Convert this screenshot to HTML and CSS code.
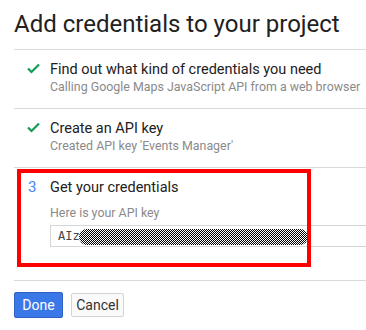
FILE: index.html
```html
<!DOCTYPE html>
<html>
<head>
<meta charset="utf-8">
<link rel="stylesheet" href="styles.css">
</head>
<body>
<div class="page">
  <h1 class="title">Add credentials to your project</h1>
  <div class="step">
    <div class="marker">
      <svg class="check" width="13" height="11" viewBox="0 0 13 11"><path d="M1 5.5 L4.5 9 L12 1.5" fill="none" stroke="#0f9d58" stroke-width="2.2"/></svg>
    </div>
    <div class="body">
      <div class="step-title">Find out what kind of credentials you need</div>
      <div class="step-sub">Calling Google Maps JavaScript API from a web browser</div>
    </div>
  </div>
  <div class="step">
    <div class="marker">
      <svg class="check" width="13" height="11" viewBox="0 0 13 11"><path d="M1 5.5 L4.5 9 L12 1.5" fill="none" stroke="#0f9d58" stroke-width="2.2"/></svg>
    </div>
    <div class="body">
      <div class="step-title">Create an API key</div>
      <div class="step-sub">Created API key 'Events Manager'</div>
    </div>
  </div>
  <div class="step step-active">
    <div class="marker"><span class="num">3</span></div>
    <div class="body">
      <div class="step-title">Get your credentials</div>
      <div class="label">Here is your API key</div>
      <div class="keybox"><span class="key">AIza</span><span class="redact"></span></div>
    </div>
    <div class="highlight"></div>
  </div>
  <div class="actions">
    <button class="btn btn-primary">Done</button>
    <button class="btn btn-secondary">Cancel</button>
  </div>
</div>
</body>
</html>
```

FILE: styles.css
```css
html, body {
  margin: 0;
  padding: 0;
  background: #fff;
  overflow: hidden;
}
body {
  font-family: Roboto, "Liberation Sans", sans-serif;
  color: #212121;
}
.page {
  padding-left: 14px;
  width: 352px;
}
.title {
  margin: 10px 0 0 0;
  font-size: 24px;
  line-height: 28px;
  font-weight: 400;
  color: #212121;
  padding-bottom: 11px;
}
.step {
  position: relative;
  display: flex;
  border-top: 1px solid #dadada;
  padding: 10px 0 13px 0;
}
.marker {
  width: 36px;
  flex: none;
  position: relative;
}
.check {
  display: block;
  margin: 3px 0 0 13px;
}
.num {
  display: block;
  margin-left: 14px;
  font-size: 15px;
  line-height: 19px;
  color: #4285f4;
}
.body {
  flex: 1;
  min-width: 0;
}
.step-title {
  font-size: 14.5px;
  line-height: 19px;
  color: #212121;
  white-space: nowrap;
}
.step-sub {
  font-size: 12.4px;
  line-height: 16px;
  color: #8a8a8a;
  white-space: nowrap;
}
.label {
  margin-top: 8px;
  font-size: 12.4px;
  line-height: 16px;
  color: #8a8a8a;
}
.keybox {
  position: relative;
  margin-top: 4px;
  height: 22px;
  box-sizing: border-box;
  border: 1px solid #d6d6d6;
  border-right: none;
  padding-left: 7px;
  font-family: "DejaVu Sans Mono", "Liberation Mono", monospace;
  font-size: 12px;
  line-height: 20px;
  color: #444;
}
.redact {
  position: absolute;
  left: 28px;
  top: 3px;
  width: 229px;
  height: 16px;
  border-radius: 8px;
  background: repeating-conic-gradient(#000 0 25%, #fff 0 50%) 0 0 / 2px 2px;
}
.step-active {
  padding-bottom: 33px;
}
.highlight {
  position: absolute;
  left: 3px;
  top: 1px;
  width: 294px;
  height: 98px;
  box-sizing: border-box;
  border: 4px solid #ff0000;
}
.actions {
  border-top: 1px solid #dadada;
  padding-top: 11px;
  display: flex;
  align-items: center;
  gap: 8px;
}
.btn {
  font-family: Roboto, "Liberation Sans", sans-serif;
  font-size: 14px;
  border-radius: 2px;
  box-sizing: border-box;
  margin: 0;
  padding: 0;
}
.btn-primary {
  width: 49px;
  height: 26px;
  background: #3b78e7;
  border: 1px solid #2f61c5;
  color: #fff;
}
.btn-secondary {
  width: 53px;
  height: 24px;
  background: #fafafa;
  border: 1px solid #d4d4d4;
  color: #333;
}
```
